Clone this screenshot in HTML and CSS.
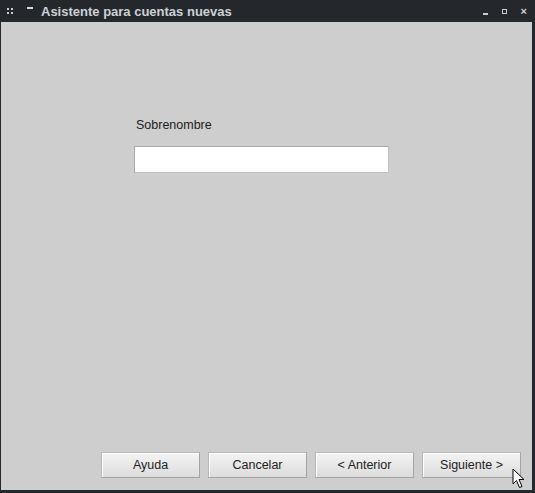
FILE: index.html
```html
<!DOCTYPE html>
<html lang="es">
  <head>
    <meta charset="UTF-8" />
    <title>Asistente para cuentas nuevas</title>
    <link rel="stylesheet" href="styles.css">
  </head>
  <body>
    <div class="window">
      <div class="titlebar">
        <svg class="tb-grip" width="6" height="6" viewBox="0 0 6 6">
          <rect x="0" y="0" width="2" height="2" fill="#c9cdd1"/>
          <rect x="4" y="0" width="2" height="2" fill="#c9cdd1"/>
          <rect x="0" y="4" width="2" height="2" fill="#c9cdd1"/>
          <rect x="4" y="4" width="2" height="2" fill="#c9cdd1"/>
        </svg>
        <span class="tb-menu"></span>
        <span class="tb-title">Asistente para cuentas nuevas</span>
        <div class="tb-controls">
          <span class="ctl-min"></span>
          <span class="ctl-max"></span>
          <span class="ctl-close">&times;</span>
        </div>
      </div>

      <div class="content">
        <!-- nickname field -->
        <div class="form">
          <label for="nick">Sobrenombre</label>
          <input id="nick" type="text">
        </div>

        <div class="buttons">
          <button>Ayuda</button>
          <button>Cancelar</button>
          <button>&lt; Anterior</button>
          <button>Siguiente &gt;</button>
        </div>
      </div>

      <!-- mouse pointer over the Next button -->
      <svg class="pointer" width="14" height="22" viewBox="0 0 14 22">
        <path d="M1 1 L1 16 L4.5 12.5 L7.5 19.5 L10 18.5 L7 11.5 L12 11.5 Z" fill="#fff" stroke="#000" stroke-width="1"/>
      </svg>
    </div>
  </body>
</html>
```

FILE: styles.css
```css
body {
  margin: 0;
  padding: 0;
  background: #24282c;
  font-family: "Liberation Sans", Arial, sans-serif;
}

.window {
  position: relative;
  width: 535px;
  height: 493px;
  display: flex;
  flex-direction: column;
  background: #24282c;
  overflow: hidden;
}

.titlebar {
  height: 22px;
  display: flex;
  align-items: center;
  color: #cdd1d5;
  font-size: 13px;
  font-weight: bold;
}

.tb-grip {
  margin-left: 7px;
}

.tb-menu {
  width: 6px;
  height: 2px;
  background: #d6d9dc;
  margin-left: 14px;
  margin-top: -6px;
}

.tb-title {
  margin-left: 8px;
}

.tb-controls {
  margin-left: auto;
  display: flex;
  align-items: center;
  gap: 14px;
  margin-right: 8px;
}

.ctl-min {
  width: 5px;
  height: 2px;
  background: #c9cdd1;
  margin-top: 5px;
}

.ctl-max {
  width: 3px;
  height: 3px;
  border: 1px solid #c9cdd1;
}

.ctl-close {
  font-size: 11px;
  font-weight: bold;
}

.content {
  flex: 1;
  margin: 0 3px 3px 1px;
  background: #cecece;
  display: flex;
  flex-direction: column;
}

.form {
  display: flex;
  flex-direction: column;
  margin: 96px 0 0 133px;
  width: 255px;
}

.form label {
  font-size: 12.5px;
  color: #1c1c1c;
  margin-left: 2px;
}

.form input {
  margin-top: 14px;
  height: 27px;
  box-sizing: border-box;
  background: #fff;
  border: 1px solid #a9a9a9;
  border-right-color: #c0c0c0;
  border-bottom-color: #c0c0c0;
  outline: none;
}

.buttons {
  margin-top: auto;
  display: flex;
  justify-content: flex-end;
  gap: 8px;
  padding: 0 11px 12px 0;
}

.buttons button {
  width: 99px;
  height: 26px;
  font-family: "Liberation Sans", Arial, sans-serif;
  font-size: 12.5px;
  color: #222;
  background: linear-gradient(#f4f4f4, #dcdcdc);
  border: 1px solid #a4a4a4;
  border-top-color: #b8b8b8;
  border-left-color: #b8b8b8;
  box-shadow: inset 1px 1px 0 #fff;
  padding: 0;
}

.pointer {
  position: absolute;
  left: 512px;
  top: 468px;
}
```
